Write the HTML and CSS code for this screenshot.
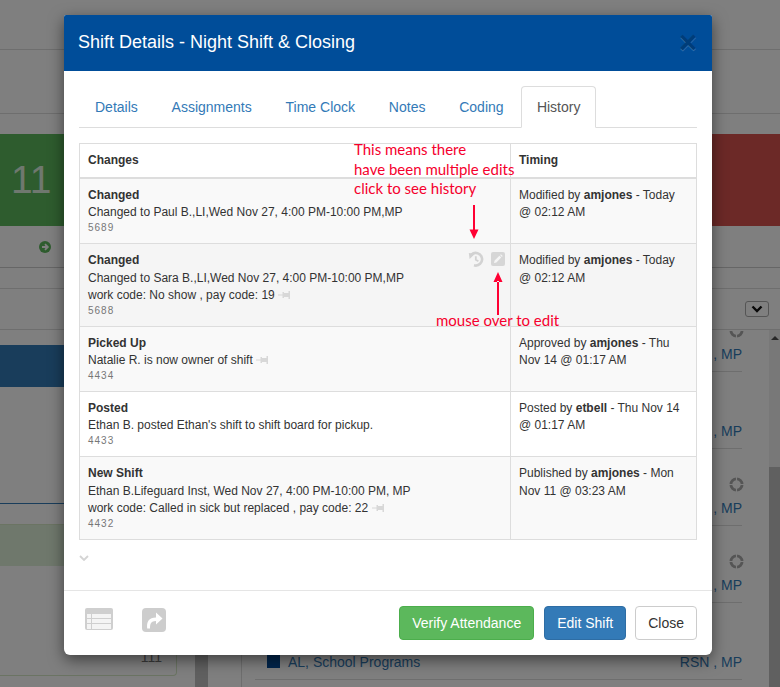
FILE: index.html
```html
<!DOCTYPE html>
<html lang="en">
<head>
<meta charset="utf-8">
<title>Shift Details</title>
<link rel="stylesheet" href="styles.css">
</head>
<body>
<div class="page">
  <div class="top-a"></div>
  <div class="top-b"></div>
  <div class="tiles">
    <div class="tile tile-green"><span class="tile-num">11</span></div>
    <div class="tile tile-red"></div>
  </div>
  <div class="tile-foot">
    <svg class="go" viewBox="0 0 12 12"><circle cx="6" cy="6" r="6" fill="#5cb85c"/><path d="M3 6h5M6 3.200 8.800 6 6 8.800" fill="none" stroke="#fff" stroke-width="1.800"/></svg>
  </div>
  <div class="panel-head"><span class="chev-btn"><svg viewBox="0 0 12 8" width="12" height="8"><path d="M1.500 1.500 6 6l4.500-4.500" fill="none" stroke="#111" stroke-width="2.400"/></svg></span></div>
  <div class="main">
    <div class="left">
      <div class="band"></div>
      <div class="rule"></div>
      <div class="card">
        <div class="card-top"></div>
        <div class="card-num">111</div>
      </div>
    </div>
    <div class="left-scroll"></div>
    <div class="right">
      <div class="item"><svg class="ring ring-cut" viewBox="0 0 16 16"><circle cx="8" cy="8" r="6" fill="none" stroke="#aaa" stroke-width="3"/><path d="M8 0v16M0 8h16" stroke="#fff" stroke-width="1.200"/></svg><span class="who">RSN , MP</span></div>
      <div class="item"><span class="who">RSN , MP</span></div>
      <div class="item"><svg class="ring" viewBox="0 0 16 16"><circle cx="8" cy="8" r="6" fill="none" stroke="#aaa" stroke-width="3"/><path d="M8 0v16M0 8h16" stroke="#fff" stroke-width="1.200"/></svg><span class="who">RSN , MP</span></div>
      <div class="item"><svg class="ring" viewBox="0 0 16 16"><circle cx="8" cy="8" r="6" fill="none" stroke="#aaa" stroke-width="3"/><path d="M8 0v16M0 8h16" stroke="#fff" stroke-width="1.200"/></svg><span class="who">RSN , MP</span></div>
      <div class="item"><i class="sq"></i><span class="name">AL, School Programs</span><span class="who">RSN , MP</span></div>
    </div>
    <div class="right-scroll"><i class="up"></i><div class="thumb"></div></div>
  </div>
</div>

<div class="backdrop"></div>

<section class="modal">
  <header class="m-head">
    <h4>Shift Details - Night Shift &amp; Closing</h4>
    <span class="close-x">×</span>
  </header>
  <div class="m-body">
    <nav class="tabs">
      <a>Details</a><a>Assignments</a><a>Time Clock</a><a>Notes</a><a>Coding</a><a class="on">History</a>
    </nav>
    <table class="hist">
      <thead><tr><th class="c1">Changes</th><th class="c2">Timing</th></tr></thead>
      <tbody>
        <tr class="odd">
          <td><b>Changed</b><br>Changed to Paul B.,LI,Wed Nov 27, 4:00 PM-10:00 PM,MP<span class="id">5689</span></td>
          <td>Modified by <b>amjones</b> - Today @ 02:12 AM</td>
        </tr>
        <tr class="hover">
          <td class="has-tools">
            <span class="tools">
              <svg class="t-hist" viewBox="0 0 16 16"><path d="M3.400 3.700A6.300 6.300 0 1 1 6 14.300" fill="none" stroke="#d2d2d2" stroke-width="2.600"/><path d="M.8 2 7 2.800 1.600 8z" fill="#d2d2d2"/><path d="M7.800 5.200v3.600l2.600 1.500" fill="none" stroke="#d2d2d2" stroke-width="1.800"/></svg>
              <svg class="t-edit" viewBox="0 0 14 14"><rect width="14" height="14" rx="2" fill="#d6d6d6"/><path d="m3 11 .6-2.400 4.800-4.800 1.800 1.800-4.800 4.800zM9.100 3.100l.8-.8 1.800 1.800-.8.8z" fill="#f5f5f5"/></svg>
            </span>
            <b>Changed</b><br>Changed to Sara B.,LI,Wed Nov 27, 4:00 PM-10:00 PM,MP<br>work code: No show , pay code: 19 <svg class="pin" viewBox="0 0 14 8"><path d="M0 3.500h5v1H0zM4.500 1h1.500v6H4.500zM6 2h4.500v4H6zM10.500 0H12v8h-1.500z" fill="#d8d8d8"/></svg><span class="id">5688</span>
          </td>
          <td>Modified by <b>amjones</b> - Today @ 02:12 AM</td>
        </tr>
        <tr class="odd">
          <td><b>Picked Up</b><br>Natalie R. is now owner of shift <svg class="pin" viewBox="0 0 14 8"><path d="M0 3.500h5v1H0zM4.500 1h1.500v6H4.500zM6 2h4.500v4H6zM10.500 0H12v8h-1.500z" fill="#d8d8d8"/></svg><span class="id">4434</span></td>
          <td>Approved by <b>amjones</b> - Thu Nov 14 @ 01:17 AM</td>
        </tr>
        <tr>
          <td><b>Posted</b><br>Ethan B. posted Ethan's shift to shift board for pickup.<span class="id">4433</span></td>
          <td>Posted by <b>etbell</b> - Thu Nov 14 @ 01:17 AM</td>
        </tr>
        <tr class="odd">
          <td><b>New Shift</b><br>Ethan B.Lifeguard Inst, Wed Nov 27, 4:00 PM-10:00 PM, MP<br>work code: Called in sick but replaced , pay code: 22 <svg class="pin" viewBox="0 0 14 8"><path d="M0 3.500h5v1H0zM4.500 1h1.500v6H4.500zM6 2h4.500v4H6zM10.500 0H12v8h-1.500z" fill="#d8d8d8"/></svg><span class="id">4432</span></td>
          <td>Published by <b>amjones</b> - Mon Nov 11 @ 03:23 AM</td>
        </tr>
      </tbody>
    </table>
    <svg class="more" viewBox="0 0 10 6"><path d="m1 1 4 4 4-4" fill="none" stroke="#d4d4d4" stroke-width="1.800"/></svg>
  </div>
  <footer class="m-foot">
    <div class="foot-icons">
      <svg class="f-list" viewBox="0 0 28 22"><rect width="28" height="22" rx="2" fill="#cfcfcf"/><rect x="2" y="6" width="24" height="15" fill="#f4f4f4"/><path d="M2 10.500h24M2 15.500h24M6.500 6v15" stroke="#cfcfcf" stroke-width="1"/></svg>
      <svg class="f-share" viewBox="0 0 24 24"><rect width="24" height="24" rx="4" fill="#cdcdcd"/><path d="M14 4.500 20.500 10.500 14 16.500v-3.600c-3 0-4.800 1.200-5.500 3.100-.4 1.100-.5 2.500-.5 4.500H5.200c-.4-3.200-.1-6 1.300-8 1.500-2.100 4-3 7.500-3.100z" fill="#fff"/></svg>
    </div>
    <button class="btn btn-green">Verify Attendance</button>
    <button class="btn btn-blue">Edit Shift</button>
    <button class="btn btn-plain">Close</button>
  </footer>
</section>

<div class="note note-top">This means there<br>have been multiple edits<br>click to see history</div>
<svg class="arrow arrow-down" viewBox="0 0 12 34"><path d="M5 0h2v25H5zM1.500 24.500h9L6 34z" fill="#ff0033"/></svg>
<svg class="arrow arrow-up" viewBox="0 0 12 43"><path d="M5 9h2v34H5zM1.500 10h9L6 0z" fill="#ff0033"/></svg>
<div class="note note-bottom">mouse over to edit</div>
</body>
</html>
```

FILE: styles.css
```css
* { box-sizing: border-box; }
html, body { margin: 0; height: 687px; overflow: hidden; }
body { font-family: "Liberation Sans", Arial, sans-serif; font-size: 14px; color: #333; background: #fff; position: relative; }

/* page behind the dialog */
.page { width: 780px; height: 687px; display: flex; flex-direction: column; overflow: hidden; }
.top-a { height: 50px; border-bottom: 1px solid #ddd; flex: none; }
.top-b { height: 64px; border-bottom: 1px solid #ddd; flex: none; }
.tiles { height: 92px; margin-top: 20px; display: flex; flex: none; }
.tile { flex: 1; display: flex; align-items: center; }
.tile-green { background: #5cb85c; }
.tile-red { background: #d9534f; }
.tile-num { margin-left: 11px; font-size: 39px; color: #fff; opacity: .8; }
.tile-foot { height: 42px; border-bottom: 1px solid #ccc; flex: none; display: flex; align-items: center; padding-left: 39px; }
.go { width: 12px; height: 12px; }
.panel-head { height: 42px; margin-top: 20px; border-top: 1px solid #ddd; border-bottom: 1px solid #ddd; flex: none; display: flex; align-items: center; justify-content: flex-end; padding-right: 11px; }
.chev-btn { width: 24px; height: 16px; border: 1px solid #aaa; border-radius: 3px; display: flex; align-items: center; justify-content: center; }
.main { flex: 1; display: flex; min-height: 0; }
.left { width: 195px; flex: none; padding-top: 15px; }
.band { height: 42px; background: #337ab7; }
.rule { height: 1px; margin-top: 116px; background: #337ab7; }
.card { height: 152px; margin-top: 20px; width: 177px; border: 1px solid #d6e9c6; border-left: 0; border-radius: 0 0 4px 0; }
.card-top { height: 41px; background: #dff0d8; }
.card-num { margin-top: 84px; text-align: right; padding-right: 14px; font-size: 14px; line-height: 14px; color: #777; }
.left-scroll { width: 13px; flex: none; background: #c1c1c1; }
.right { width: 528px; margin-left: 33px; flex: none; border-left: 1px solid #ddd; padding: 0 27px 0 13px; overflow: hidden; }
.item { height: 77px; border-bottom: 1px solid #ddd; position: relative; display: flex; align-items: flex-end; padding-bottom: 9px; font-size: 14px; color: #337ab7; }
.item:first-child { height: 42px; overflow: visible; }
.who { margin-left: auto; white-space: nowrap; }
.sq { width: 13px; height: 13px; background: #004a99; margin: 0 8px 2px 12px; }
.ring { position: absolute; right: -2px; top: 28px; width: 15px; height: 15px; }
.ring-cut { top: -7px; }
.right-scroll { width: 11px; flex: none; background: #f1f1f1; }
.up { display: block; margin: 6px auto 0; width: 0; height: 0; border: 4px solid transparent; border-top: 0; border-bottom: 4px solid #505050; }
.thumb { height: 220px; margin-top: 127px; background: #c1c1c1; }

.backdrop { position: absolute; inset: 0; background: rgba(0, 0, 0, .5); }

/* dialog */
.modal { position: absolute; left: 64px; top: 15px; width: 648px; height: 640px; background: #fff; border-radius: 2px 2px 6px 6px; box-shadow: 0 5px 15px rgba(0, 0, 0, .5); display: flex; flex-direction: column; }
.m-head { height: 56px; flex: none; background: #004d99; padding: 0 15px 2px 14px; display: flex; align-items: center; justify-content: space-between; border-radius: 2px 2px 0 0; }
.m-head h4 { margin: 0; font-size: 18px; font-weight: 400; color: #fff; }
.close-x { font-size: 31px; font-weight: 700; line-height: 1; color: #000; opacity: .2; text-shadow: 0 1px 0 #fff; }
.m-body { flex: 1; padding: 15px 15px 0; min-height: 0; }
.tabs { display: flex; height: 42px; border-bottom: 1px solid #ddd; }
.tabs a { padding: 10px 15px; height: 41px; margin-right: 1.8px; line-height: 20px; color: #337ab7; border: 1px solid transparent; }
.tabs a.on { height: 42px; padding: 10px 14.5px; color: #555; background: #fff; border: 1px solid #ddd; border-bottom-color: #fff; border-radius: 4px 4px 0 0; }
.hist { width: 618px; margin: 15px 0 0; border-collapse: collapse; font-size: 12px; line-height: 17.14px; table-layout: fixed; }
.hist th, .hist td { border: 1px solid #ddd; padding: 8px; text-align: left; vertical-align: top; }
.hist thead th { border-bottom-width: 2px; padding: 8px; }
.c1 { width: 431px; }
.hist tr.odd td { background: #f9f9f9; }
.hist tr.hover td { background: #f5f5f5; }
.hist b { font-weight: 700; }
.id { display: block; font-size: 10px; line-height: 14px; letter-spacing: 1px; color: #777; }
.has-tools { position: relative; }
.tools { position: absolute; right: 5px; top: 7px; display: flex; align-items: center; gap: 7px; }
.t-hist { width: 16px; height: 16px; display: block; }
.t-edit { width: 14px; height: 14px; display: block; }
.pin { width: 14px; height: 8px; }
.more { display: block; width: 10px; height: 6px; margin: 15px 0 0; }
.m-foot { height: 65px; flex: none; border-top: 1px solid #e5e5e5; padding: 15px 15px 15px 21px; display: flex; align-items: flex-start; }
.foot-icons { display: flex; gap: 29px; margin-right: auto; padding-top: 2px; }
.f-list { width: 28px; height: 22px; }
.f-share { width: 24px; height: 24px; }
.btn { height: 34px; padding: 6px 12px; font: 14px/20px "Liberation Sans", Arial, sans-serif; border: 1px solid transparent; border-radius: 4px; }
.btn-green { background: #5cb85c; border-color: #4cae4c; color: #fff; }
.btn-blue { background: #337ab7; border-color: #2e6da4; color: #fff; margin-left: 10px; }
.btn-plain { background: #fff; border-color: #ccc; color: #333; margin-left: 9px; }

/* annotations */
.note { position: absolute; font-family: Lato, "Liberation Sans", sans-serif; font-size: 15px; color: #f5002d; line-height: 19.5px; white-space: nowrap; }
.note-top { left: 354px; top: 140px; }
.note-bottom { left: 436px; top: 311px; }
.arrow { position: absolute; width: 12px; }
.arrow-down { left: 468px; top: 205px; height: 34px; }
.arrow-up { left: 492px; top: 272px; height: 43px; }
```
